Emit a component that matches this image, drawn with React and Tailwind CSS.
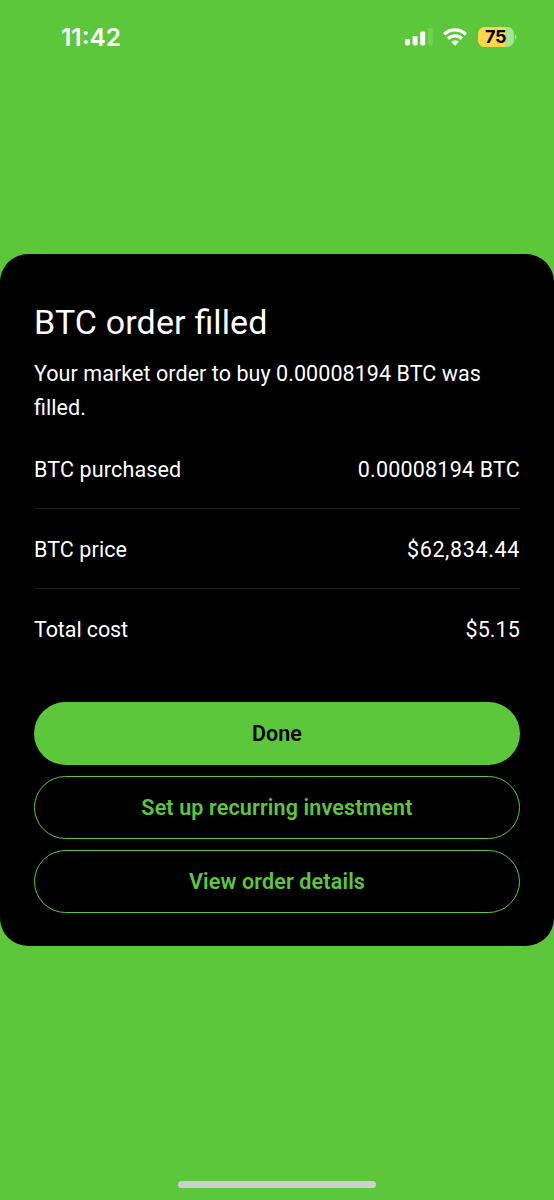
function StatusIcons() {
  return (
    <div className="flex items-center">
      <svg width="28" height="18" viewBox="0 0 28 18" className="mr-[10px]">
        <rect x="0" y="11" width="5" height="6.5" rx="1.4" fill="#fff" />
        <rect x="7.6" y="8" width="5" height="9.5" rx="1.4" fill="#fff" />
        <rect x="15.2" y="3.6" width="5" height="13.9" rx="1.4" fill="#fff" />
        <rect x="22.8" y="0" width="5" height="17.5" rx="1.4" fill="#fff" fillOpacity="0.13" />
      </svg>
      <svg width="24" height="18" viewBox="0 0 24 18" className="mr-[10.5px]">
        <g fill="none" stroke="#fff" strokeWidth="3.3">
          <path d="M1.2 6.5C7.2 0.4 16.8 0.4 22.8 6.5" />
          <path d="M5.1 10.7C9 7 15 7 18.9 10.7" />
        </g>
        <path d="M8.2 13.8C10.3 11.9 13.7 11.9 15.8 13.8L12 17.7Z" fill="#fff" />
      </svg>
      <div className="flex h-5 w-9 items-center justify-center rounded-[6.5px] bg-linear-to-r from-[#fdd649] from-75% to-[#a3e495] to-75% font-['Inter'] text-[18px] leading-5 font-bold tracking-[-0.4px] text-black">
        75
      </div>
      <svg width="3" height="8" viewBox="0 0 3 8">
        <path d="M1 1Q4 4 1 7Z" fill="#a3e495" />
      </svg>
    </div>
  );
}

function Filled() {
  return (
    <>
      <span className="tracking-normal">fi</span>lled
    </>
  );
}

function Row({ label, value, last, labelClass, valueClass }) {
  return (
    <div className={`flex h-[79.7px] items-center justify-between ${last ? "pt-[2px]" : "border-b border-[#1d1d1d] pt-[3px]"}`}>
      <span className={labelClass}>{label}</span>
      <span className={valueClass}>{value}</span>
    </div>
  );
}

export default function App() {
  return (
    <main className="flex h-[1200px] w-[554px] flex-col overflow-hidden bg-[#5dc73c] font-['Roboto',sans-serif] text-white">
      <header className="flex h-[254px] items-start justify-between pt-[27px] pr-[37.5px] pl-[61px]">
        <span className="font-['Inter'] text-[24.5px] leading-5 font-semibold">11:42</span>
        <StatusIcons />
      </header>
      <section className="h-[692.4px] rounded-[28px] bg-black px-[34px] pt-[45px]">
        <h1 className="text-[34px] leading-[46px] font-normal tracking-[0.15px]">
          BTC order <Filled />
        </h1>
        <div className="text-[21.5px] font-normal">
          <p className="mt-[12px] leading-[34px] tracking-[0.06px]">
            Your market order to buy 0.00008194 BTC was
            <br />
            <Filled />.
          </p>
          <div className="mt-[4.5px]">
            <Row label="BTC purchased" value="0.00008194 BTC" labelClass="tracking-[0.15px]" valueClass="tracking-[0.2px]" />
            <Row label="BTC price" value="$62,834.44" labelClass="tracking-[0.1px]" valueClass="tracking-[0.65px]" />
            <Row label="Total cost" value="$5.15" labelClass="tracking-[-0.1px]" valueClass="tracking-[0.1px]" last />
          </div>
        </div>
        <div className="mt-[33.7px] flex flex-col gap-[11.5px] text-[21.5px] font-semibold text-[#5dc73c]">
          <button className="h-[62.5px] rounded-full bg-[#5dc73c] pt-[2px] text-black">Done</button>
          <button className="h-[62.5px] rounded-full border border-[#5dc73c] pt-[2px] tracking-[0.15px]">Set up recurring investment</button>
          <button className="h-[62.5px] rounded-full border border-[#5dc73c] pt-[2px] tracking-[0.15px]">View order details</button>
        </div>
      </section>
      <footer className="flex flex-1 items-end justify-center pb-[12px]">
        <div className="h-[7px] w-[198px] rounded-full bg-[#cecece]" />
      </footer>
    </main>
  );
}
